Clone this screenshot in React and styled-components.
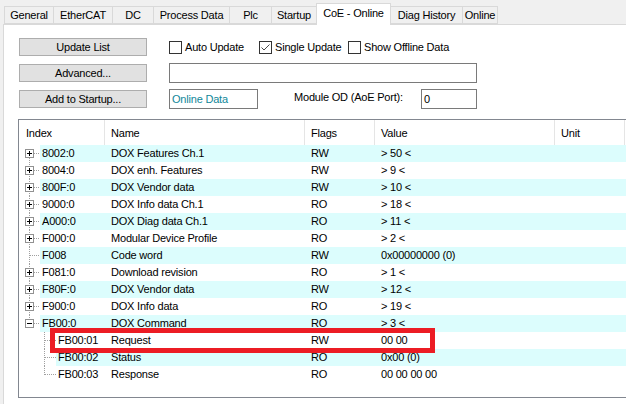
import React from 'react';
import styled, { createGlobalStyle } from 'styled-components';

const Global = createGlobalStyle`
  html, body { margin: 0; padding: 0; background: #f0f0f0; }
  body {
    font-family: "Liberation Sans", Arial, sans-serif;
    font-size: 11px;
    letter-spacing: -0.2px;
    color: #000;
    width: 626px;
    height: 404px;
    overflow: hidden;
  }
  * { box-sizing: border-box; }
`;

const Window = styled.div`
  width: 626px;
  height: 404px;
  display: flex;
  flex-direction: column;
  overflow: hidden;
  background: #f0f0f0;
`;

const TabBar = styled.div`
  display: flex;
  align-items: flex-end;
  height: 24px;
  padding-left: 4px;
  position: relative;
  z-index: 1;
`;

const Tab = styled.div`
  width: ${p => p.$w}px;
  height: ${p => (p.$active ? 22 : 18)}px;
  margin-left: -1px;
  margin-bottom: ${p => (p.$active ? -1 : 0)}px;
  border: 1px solid #d9d9d9;
  border-bottom: ${p => (p.$active ? 'none' : '1px solid #d9d9d9')};
  background: ${p => (p.$active ? '#ffffff' : '#f0f0f0')};
  display: flex;
  align-items: center;
  justify-content: center;
  padding-bottom: ${p => (p.$active ? 3 : 0)}px;
  white-space: nowrap;
  &:first-child { margin-left: 0; }
`;

const Panel = styled.div`
  flex: 1;
  margin-left: 3px;
  background: #ffffff;
  border-top: 1px solid #d9d9d9;
  border-left: 1px solid #d9d9d9;
  padding: 13px 0 6px 15px;
  display: flex;
  flex-direction: column;
  overflow: hidden;
`;

const Controls = styled.div`
  display: grid;
  grid-template-columns: 128px 1fr;
  grid-auto-rows: 18px;
  column-gap: 22px;
  row-gap: 8px;
  align-items: center;
`;

const Button = styled.div`
  height: 18px;
  background: #e1e1e1;
  border: 1px solid #adadad;
  display: flex;
  align-items: center;
  justify-content: center;
  white-space: nowrap;
`;

const Line = styled.div`
  display: flex;
  align-items: center;
  height: 18px;
`;

const CheckItem = styled.div`
  display: flex;
  align-items: center;
  gap: 3px;
  width: ${p => (p.$w ? `${p.$w}px` : 'auto')};
  white-space: nowrap;
`;

const Box = styled.div`
  width: 13px;
  height: 13px;
  border: 1px solid #333333;
  background: #fff;
  display: flex;
  align-items: center;
  justify-content: center;
`;

const TextBox = styled.div`
  width: ${p => p.$w}px;
  height: 20px;
  border: 1px solid #7a7a7a;
  background: #fff;
  padding-left: 2px;
  display: flex;
  align-items: center;
  color: ${p => p.$color || '#000'};
  white-space: nowrap;
  flex: none;
`;

const Label = styled.div`
  width: 127px;
  margin-left: 36px;
  padding-bottom: 5px;
  white-space: nowrap;
`;

const List = styled.div`
  margin-top: 11px;
  margin-left: -1px;
  margin-right: -30px;
  height: 279px;
  border: 1px solid #828790;
  background: #fff;
  overflow: hidden;
`;

const Header = styled.div`
  display: flex;
  height: 25px;
`;

const HeaderCell = styled.div`
  width: ${p => p.$w}px;
  flex: none;
  border-right: 1px solid #e5e5e5;
  padding-left: ${p => p.$pad}px;
  display: flex;
  align-items: center;
  white-space: nowrap;
`;

const Row = styled.div`
  display: flex;
  height: 17px;
  position: relative;
`;

const Gutter = styled.svg`
  flex: none;
  display: block;
`;

const Cells = styled.div`
  flex: 1;
  display: flex;
  background: ${p => (p.$alt ? '#dcfdfd' : '#ffffff')};
  line-height: 17px;
  white-space: nowrap;
`;

const Cell = styled.div`
  width: ${p => p.$w}px;
  flex: none;
  padding-left: ${p => p.$pad}px;
  overflow: hidden;
`;

const RedBox = styled.div`
  position: absolute;
  left: 31px;
  top: -4px;
  width: 385px;
  height: 25px;
  border: 5px solid #ec1c24;
  pointer-events: none;
  z-index: 2;
`;

const tabs = [
  ['General', 50],
  ['EtherCAT', 60],
  ['DC', 42],
  ['Process Data', 77],
  ['Plc', 43],
  ['Startup', 46],
  ['CoE - Online', 75, true],
  ['Diag History', 73],
  ['Online', 36],
];

const rows = [
  { i: '8002:0', n: 'DOX Features Ch.1', f: 'RW', v: '> 50 <', e: '+' },
  { i: '8004:0', n: 'DOX enh. Features', f: 'RW', v: '> 9 <', e: '+' },
  { i: '800F:0', n: 'DOX Vendor data', f: 'RW', v: '> 10 <', e: '+' },
  { i: '9000:0', n: 'DOX Info data Ch.1', f: 'RO', v: '> 18 <', e: '+' },
  { i: 'A000:0', n: 'DOX Diag data Ch.1', f: 'RO', v: '> 11 <', e: '+' },
  { i: 'F000:0', n: 'Modular Device Profile', f: 'RO', v: '> 2 <', e: '+' },
  { i: 'F008', n: 'Code word', f: 'RW', v: '0x00000000 (0)', e: null },
  { i: 'F081:0', n: 'Download revision', f: 'RO', v: '> 1 <', e: '+' },
  { i: 'F80F:0', n: 'DOX Vendor data', f: 'RW', v: '> 12 <', e: '+' },
  { i: 'F900:0', n: 'DOX Info data', f: 'RO', v: '> 19 <', e: '+' },
  { i: 'FB00:0', n: 'DOX Command', f: 'RO', v: '> 3 <', e: '-', last: true },
  { i: 'FB00:01', n: 'Request', f: 'RW', v: '00 00', child: true, mark: true },
  { i: 'FB00:02', n: 'Status', f: 'RO', v: '0x00 (0)', child: true },
  { i: 'FB00:03', n: 'Response', f: 'RO', v: '00 00 00 00', child: true, lastChild: true },
];

const DOT = '#a0a0a0';

function TreeGutter({ row, first }) {
  if (row.child) {
    return (
      <Gutter width="37" height="17" shapeRendering="crispEdges">
        <line x1="25.5" y1="0" x2="25.5" y2={row.lastChild ? 9 : 17} stroke={DOT} strokeDasharray="1 1" />
        <line x1="26" y1="8.5" x2="37" y2="8.5" stroke={DOT} strokeDasharray="1 1" />
      </Gutter>
    );
  }
  return (
    <Gutter width="21" height="17" shapeRendering="crispEdges">
      <line x1="10.5" y1={first ? 9 : 0} x2="10.5" y2={row.last ? 8 : 17} stroke={DOT} strokeDasharray="1 1" />
      <line x1={row.e ? 15 : 11} y1="8.5" x2="21" y2="8.5" stroke={DOT} strokeDasharray="1 1" />
      {row.e && (
        <>
          <rect x="6.5" y="4.5" width="8" height="8" fill="#fff" stroke="#919191" />
          <line x1="8" y1="8.5" x2="13" y2="8.5" stroke="#000" />
          {row.e === '+' && <line x1="10.5" y1="6" x2="10.5" y2="11" stroke="#000" />}
        </>
      )}
    </Gutter>
  );
}

export default function App() {
  return (
    <Window>
      <Global />
      <TabBar>
        {tabs.map(([t, w, a]) => (
          <Tab key={t} $w={w} $active={a}>{t}</Tab>
        ))}
      </TabBar>
      <Panel>
        <Controls>
          <Button>Update List</Button>
          <Line>
            <CheckItem $w={90}>
              <Box />
              Auto Update
            </CheckItem>
            <CheckItem $w={89}>
              <Box>
                <svg width="11" height="11" viewBox="0 0 11 11">
                  <polyline points="1.5,5.5 4,8 9.5,2.5" fill="none" stroke="#4a4a4a" strokeWidth="1" />
                </svg>
              </Box>
              Single Update
            </CheckItem>
            <CheckItem>
              <Box />
              Show Offline Data
            </CheckItem>
          </Line>
          <Button>Advanced...</Button>
          <Line>
            <TextBox $w={308} />
          </Line>
          <Button>Add to Startup...</Button>
          <Line>
            <TextBox $w={89} $color="#10879a">Online Data</TextBox>
            <Label>Module OD (AoE Port):</Label>
            <TextBox $w={56}>0</TextBox>
          </Line>
        </Controls>
        <List>
          <Header>
            <HeaderCell $w={86} $pad={7}>Index</HeaderCell>
            <HeaderCell $w={200} $pad={6}>Name</HeaderCell>
            <HeaderCell $w={70} $pad={6}>Flags</HeaderCell>
            <HeaderCell $w={180} $pad={6}>Value</HeaderCell>
            <HeaderCell $w={70} $pad={6}>Unit</HeaderCell>
          </Header>
          {rows.map((r, idx) => (
            <Row key={r.i}>
              <TreeGutter row={r} first={idx === 0} />
              <Cells $alt={idx % 2 === 0}>
                <Cell $w={r.child ? 49 : 65} $pad={2}>{r.i}</Cell>
                <Cell $w={200} $pad={6}>{r.n}</Cell>
                <Cell $w={70} $pad={6}>{r.f}</Cell>
                <Cell $w={180} $pad={6}>{r.v}</Cell>
                <Cell $w={70} $pad={6}></Cell>
              </Cells>
              {r.mark && <RedBox />}
            </Row>
          ))}
        </List>
      </Panel>
    </Window>
  );
}
